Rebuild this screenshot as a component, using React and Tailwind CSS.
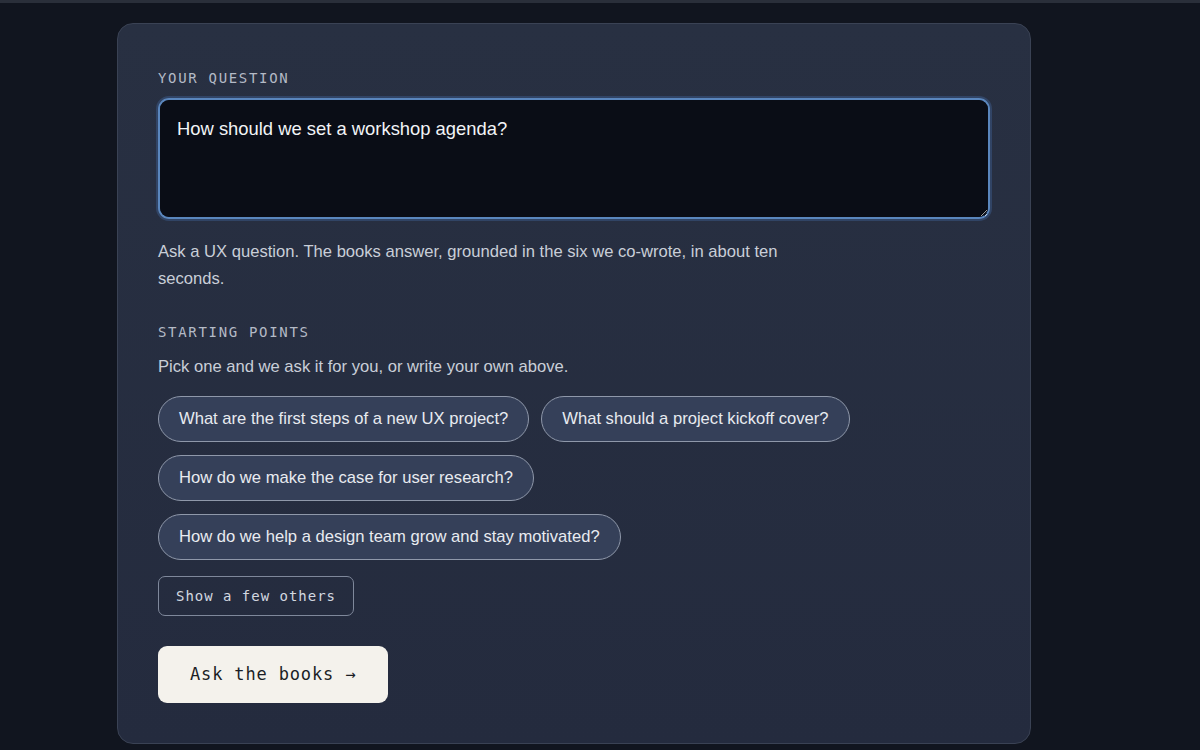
import React from 'react';

const sans = "font-['Liberation_Sans',Arial,sans-serif]";
const mono = "font-['DejaVu_Sans_Mono','Liberation_Mono',monospace]";

const prompts = [
  ['What are the first steps of a new UX project?', 'What should a project kickoff cover?'],
  ['How do we make the case for user research?'],
  ['How do we help a design team grow and stay motivated?'],
];

export default function App() {
  return (
    <div className={`min-h-[750px] bg-[#11151f] border-t-[3px] border-[#2a2f3a] ${sans}`}>
      <div className="pt-[20px] pl-[117px]">
        <div className="w-[914px] rounded-[16px] border border-[#3a4254] bg-gradient-to-b from-[#283042] to-[#242b3e] px-[40px] pt-[44px] pb-[40px]">
          <label className={`block text-[14px] tracking-[0.12em] text-[#b4bac6] leading-[20px] ${mono}`}>YOUR QUESTION</label>
          <div className="mt-[10px] rounded-[11px] border-[2px] border-[#5a86bd] shadow-[0_0_0_2px_rgba(70,110,170,0.35)]">
            <textarea
              className="block w-full h-[117px] bg-[#0a0d16] rounded-[9px] px-[17px] py-[16px] text-[18.4px] leading-[26px] text-[#f2f4f7] outline-none resize-y"
              defaultValue="How should we set a workshop agenda?"
            />
          </div>
          <p className="mt-[19px] max-w-[640px] text-[16.6px] leading-[27px] text-[#c9ced8]">
            Ask a UX question. The books answer, grounded in the six we co-wrote, in about ten seconds.
          </p>

          <div className={`mt-[30px] text-[14px] tracking-[0.12em] text-[#b4bac6] leading-[20px] ${mono}`}>STARTING POINTS</div>
          <p className="mt-[13px] text-[16.6px] leading-[24px] text-[#c9ced8]">Pick one and we ask it for you, or write your own above.</p>

          <div className="mt-[17px] flex flex-col gap-[13px]">
            {prompts.map((row, i) => (
              <div key={i} className="flex gap-[12px]">
                {row.map(q => (
                  <button
                    key={q}
                    className="h-[46px] px-[20px] rounded-full border border-[#8f98aa] bg-[#354059] text-[16.6px] text-[#e8ebf0]"
                  >
                    {q}
                  </button>
                ))}
              </div>
            ))}
          </div>

          <button className={`mt-[16px] h-[40px] px-[17px] rounded-[7px] border border-[#7f889b] text-[14px] tracking-[0.07em] text-[#d3d8e0] ${mono}`}>
            Show a few others
          </button>

          <div className="mt-[30px]">
            <button className={`h-[57px] px-[32px] rounded-[9px] bg-[#f4f2ec] text-[17px] tracking-[0.05em] text-[#1b1e25] ${mono}`}>
              Ask the books →
            </button>
          </div>
        </div>
      </div>
    </div>
  );
}
